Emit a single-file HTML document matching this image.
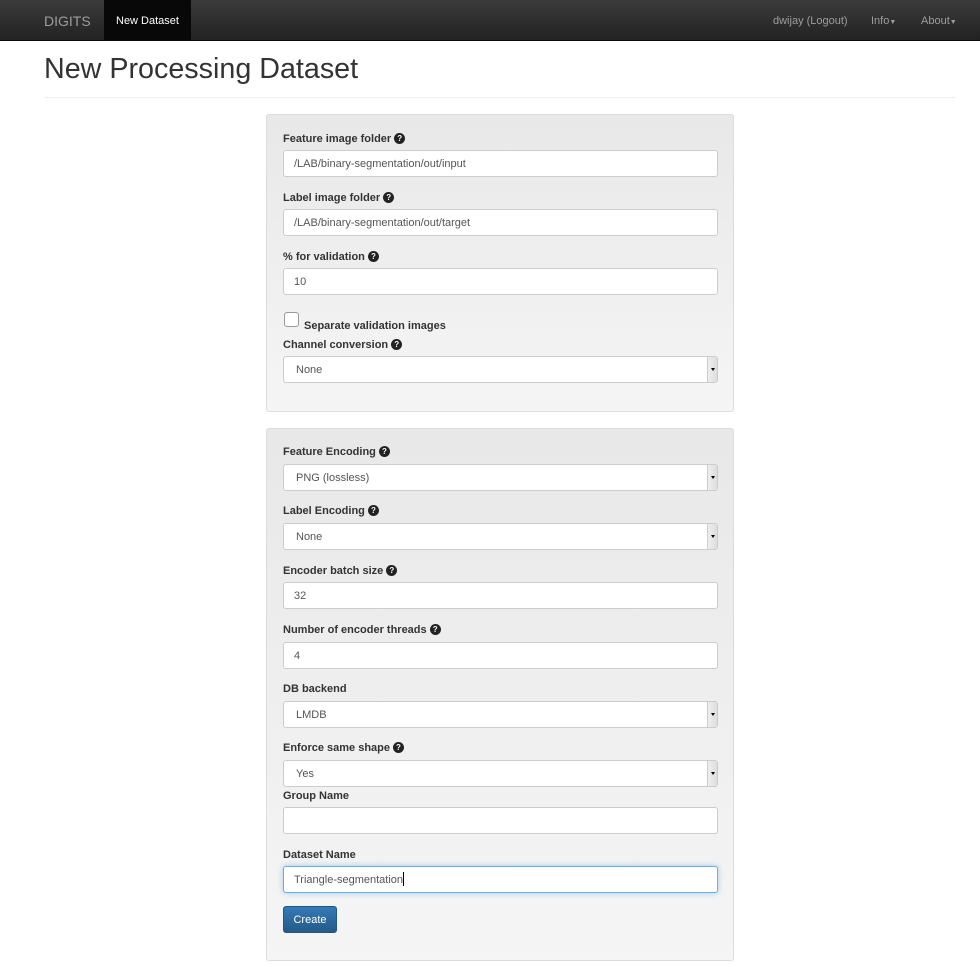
<!DOCTYPE html>
<html><head><meta charset="utf-8"><style>
*{box-sizing:border-box;margin:0;padding:0}
body{width:980px;height:980px;background:#fff;font-family:"Liberation Sans",sans-serif;position:relative;overflow:hidden;color:#333}
.nav{position:absolute;left:0;top:0;width:980px;height:41px;background:linear-gradient(#3c3c3c,#222);border-bottom:1px solid #080808}
.nav span{position:absolute;top:1px;line-height:41px;font-size:11px;color:#9d9d9d}
.panel{position:absolute;left:266px;width:468px;border:1px solid #dcdcdc;border-radius:3px;background:linear-gradient(#e8e8e8,#f5f5f5)}
.lb{position:absolute;left:283px;font-size:11px;font-weight:bold;color:#333;line-height:14px}
.q{display:inline-block;width:11px;height:11px;border-radius:50%;background:#222;color:#fff;font-size:8px;line-height:11px;text-align:center;vertical-align:1px;margin-left:3px}
.in{position:absolute;left:283px;width:435px;height:27px;background:#fff;border:1px solid #ccc;border-radius:3px;font-size:11px;line-height:27px;padding-left:10px;color:#555}
.sel{padding-left:12px}
.sel:after{content:"";position:absolute;right:0;top:0;width:9px;height:25px;background:linear-gradient(90deg,#eee,#ddd);border-left:1px solid #ccc}
.sel:before{content:"";position:absolute;right:2px;top:11px;border-left:2.5px solid transparent;border-right:2.5px solid transparent;border-top:3px solid #000;z-index:2}
</style></head><body>
<div class="nav">
<span style="left:44px;font-size:14px;color:#9d9d9d">DIGITS</span>
<span style="left:104px;top:0;width:87px;height:40px;background:#080808;color:#fff;text-align:center;line-height:43px">New Dataset</span>
<span style="left:773px">dwijay (Logout)</span>
<span style="left:871px">Info<span style="position:static;font-size:7px">▼</span></span>
<span style="left:921px">About<span style="position:static;font-size:7px">▼</span></span>
</div>
<div style="position:absolute;left:44px;top:53px;font-size:28.7px;color:#333">New Processing Dataset</div>
<div style="position:absolute;left:44px;top:97px;width:912px;height:1px;background:#eee"></div>

<div class="panel" style="top:114px;height:298px"></div>
<div class="panel" style="top:428px;height:533px"></div>

<div class="lb" style="top:132px">Feature image folder<span class="q">?</span></div>
<div class="in" style="top:150px">/LAB/binary-segmentation/out/input</div>
<div class="lb" style="top:191px">Label image folder<span class="q">?</span></div>
<div class="in" style="top:209px">/LAB/binary-segmentation/out/target</div>
<div class="lb" style="top:250px">% for validation<span class="q">?</span></div>
<div class="in" style="top:268px">10</div>
<div style="position:absolute;left:284px;top:312px;width:15px;height:15px;border:1px solid #999;border-radius:3px;background:#fff"></div>
<div class="lb" style="top:319px;left:304px">Separate validation images</div>
<div class="lb" style="top:338px">Channel conversion<span class="q">?</span></div>
<div class="in sel" style="top:356px">None</div>

<div class="lb" style="top:445px">Feature Encoding<span class="q">?</span></div>
<div class="in sel" style="top:464px">PNG (lossless)</div>
<div class="lb" style="top:504px">Label Encoding<span class="q">?</span></div>
<div class="in sel" style="top:523px">None</div>
<div class="lb" style="top:564px">Encoder batch size<span class="q">?</span></div>
<div class="in" style="top:582px">32</div>
<div class="lb" style="top:623px">Number of encoder threads<span class="q">?</span></div>
<div class="in" style="top:642px">4</div>
<div class="lb" style="top:682px">DB backend</div>
<div class="in sel" style="top:701px">LMDB</div>
<div class="lb" style="top:741px">Enforce same shape<span class="q">?</span></div>
<div class="in sel" style="top:760px">Yes</div>
<div class="lb" style="top:789px">Group Name</div>
<div class="in" style="top:807px"></div>
<div class="lb" style="top:848px">Dataset Name</div>
<div class="in" style="top:866px;border-color:#66afe9;box-shadow:0 0 6px rgba(102,175,233,.6)">Triangle-segmentation<span style="display:inline-block;width:1px;height:14px;background:#000;vertical-align:-3px"></span></div>
<div style="position:absolute;left:283px;top:906px;width:54px;height:27px;border-radius:3px;background:linear-gradient(#337ab7,#265a88);border:1px solid #245580;color:#fff;font-size:11px;line-height:27px;text-align:center">Create</div>
</body></html>
